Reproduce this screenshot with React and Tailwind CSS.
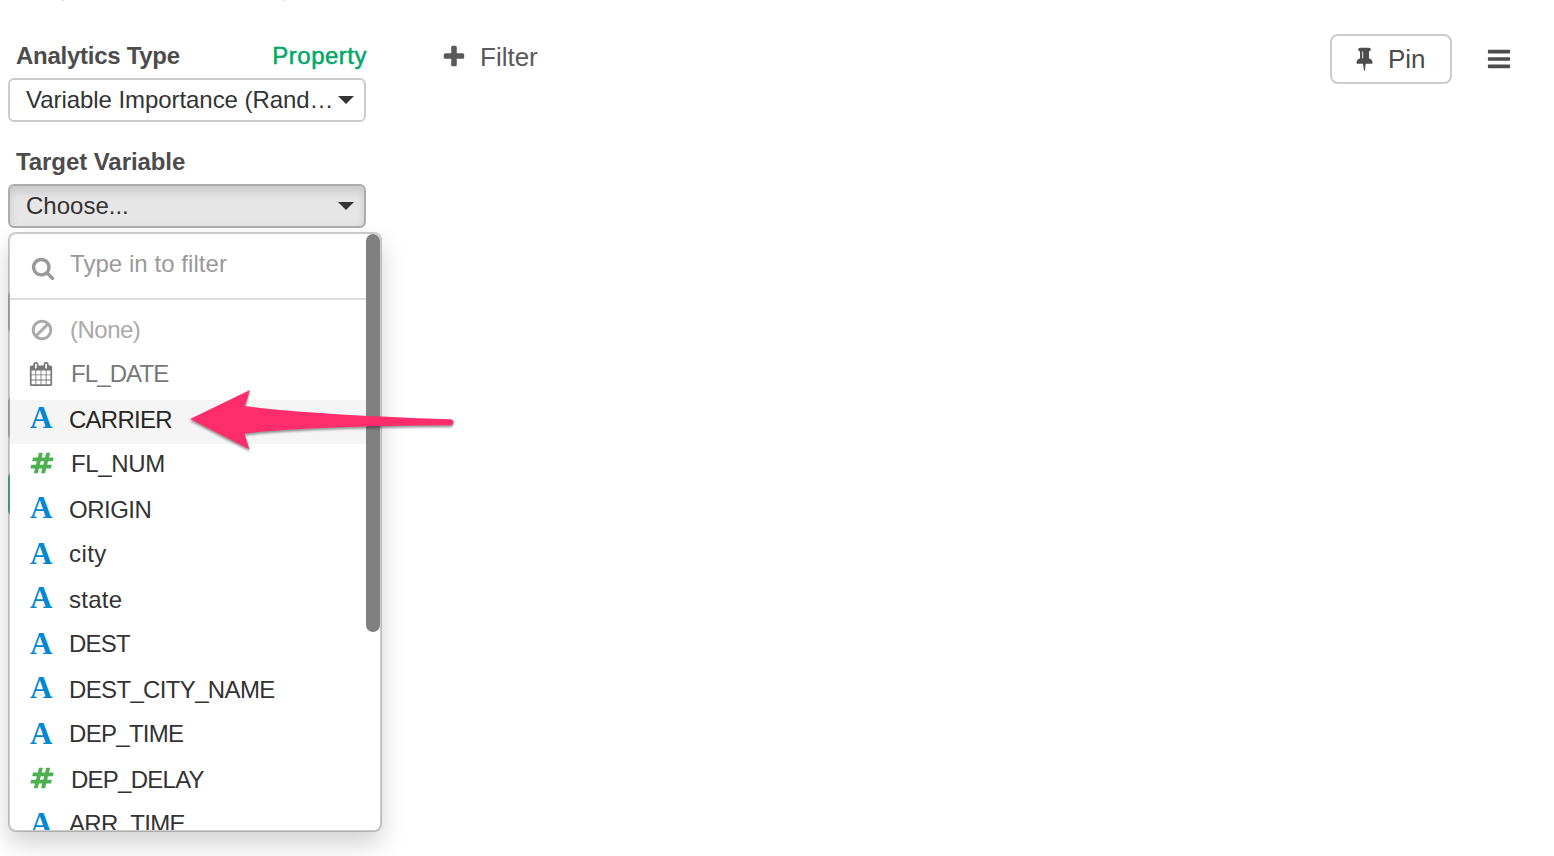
import React from "react";

const PATHS = {
  plus: "M1600 736v192q0 40-28 68t-68 28h-416v416q0 40-28 68t-68 28h-192q-40 0-68-28t-28-68v-416h-416q-40 0-68-28t-28-68v-192q0-40 28-68t68-28h416v-416q0-40 28-68t68-28h192q40 0 68 28t28 68v416h416q40 0 68 28t28 68z",
  search: "M1216 832q0-185-131.5-316.5t-316.5-131.5-316.5 131.5-131.5 316.5 131.5 316.5 316.5 131.5 316.5-131.5 131.5-316.5zm512 832q0 52-38 90t-90 38q-54 0-90-38l-343-342q-179 124-399 124-143 0-273.5-55.5t-225-150-150-225-55.5-273.5 55.5-273.5 150-225 225-150 273.5-55.5 273.5 55.5 225 150 150 225 55.5 273.5q0 220-124 399l343 343q37 37 37 90z",
  bars: "M1664 1344v128q0 26-19 45t-45 19h-1408q-26 0-45-19t-19-45v-128q0-26 19-45t45-19h1408q26 0 45 19t19 45zm0-512v128q0 26-19 45t-45 19h-1408q-26 0-45-19t-19-45v-128q0-26 19-45t45-19h1408q26 0 45 19t19 45zm0-512v128q0 26-19 45t-45 19h-1408q-26 0-45-19t-19-45v-128q0-26 19-45t45-19h1408q26 0 45 19t19 45z",
  calendar: "M192 1664h288v-288h-288v288zm352 0h320v-288h-320v288zm-352-352h288v-320h-288v320zm352 0h320v-320h-320v320zm-352-384h288v-288h-288v288zm736 736h320v-288h-320v288zm-384-736h320v-288h-320v288zm768 736h288v-288h-288v288zm-384-352h320v-320h-320v320zm-352-864v-288q0-13-9.5-22.5t-22.5-9.5h-64q-13 0-22.5 9.5t-9.5 22.5v288q0 13 9.5 22.5t22.5 9.5h64q13 0 22.5-9.5t9.5-22.5zm736 864h288v-320h-288v320zm-384-384h320v-288h-320v288zm384 0h288v-288h-288v288zm32-480v-288q0-13-9.5-22.5t-22.5-9.5h-64q-13 0-22.5 9.5t-9.5 22.5v288q0 13 9.5 22.5t22.5 9.5h64q13 0 22.5-9.5t9.5-22.5zm384-64v1280q0 52-38 90t-90 38h-1408q-52 0-90-38t-38-90v-1280q0-52 38-90t90-38h128v-96q0-66 47-113t113-47h64q66 0 113 47t47 113v96h384v-96q0-66 47-113t113-47h64q66 0 113 47t47 113v96h128q52 0 90 38t38 90z",
  ban: "M1440 893q0-161-87-295l-754 753q137 89 297 89 111 0 211.5-43.5t173.5-116.5 116-174.5 43-212.5zm-999 299l755-754q-135-91-300-91-148 0-273 73t-198 199-73 274q0 162 89 299zm1223-299q0 157-61 300t-163.5 246-245 164-298.5 61-298.5-61-245-164-163.5-246-61-300 61-299.5 163.5-245.5 245-164 298.5-61 298.5 61 245 164 163.5 245.5 61 299.5z",
  pin: "M800 864v-448q0-14-9-23t-23-9-23 9-9 23v448q0 14 9 23t23 9 23-9 9-23zm672 352q0 26-19 45t-45 19h-429l-51 483q-2 12-10.5 20.5t-20.5 8.5h-1q-27 0-32-27l-76-485h-404q-26 0-45-19t-19-45q0-123 78.5-221.5t177.5-98.5v-512q-52 0-90-38t-38-90 38-90 90-38h640q52 0 90 38t38 90-38 90-90 38v512q99 0 177.5 98.5t78.5 221.5z",
  hash: "M991 1024l64-256h-254l-64 256h254zm768-504l-56 224q-7 24-31 24h-327l-64 256h311q15 0 25 12 10 14 6 28l-56 224q-5 24-31 24h-327l-81 328q-7 24-31 24h-224q-16 0-26-12-9-12-6-28l78-312h-254l-81 328q-7 24-31 24h-225q-15 0-25-12-9-12-6-28l78-312h-311q-15 0-25-12-9-12-6-28l56-224q7-24 31-24h327l64-256h-311q-15 0-25-12-10-14-6-28l56-224q5-24 31-24h327l81-328q7-24 32-24h224q15 0 25 12 9 12 6 28l-78 312h254l81-328q7-24 32-24h224q15 0 25 12 9 12 6 28l-78 312h311q15 0 25 12 9 12 6 28z",
};

function Icon({ name, className }) {
  return (
    <svg viewBox="0 0 1792 1792" fill="currentColor" className={`shrink-0 overflow-visible ${className}`}>
      <path d={PATHS[name]} />
    </svg>
  );
}

const ROWS = [
  { type: "none", label: "(None)", text: "text-[#aaa] tracking-[-0.5px]" },
  { type: "date", label: "FL_DATE", text: "text-[#777] tracking-[-0.9px]" },
  { type: "text", label: "CARRIER", text: "text-[#262626] tracking-[-0.75px]", active: true },
  { type: "num", label: "FL_NUM", text: "text-[#333] tracking-[-0.35px]" },
  { type: "text", label: "ORIGIN", text: "text-[#333] tracking-[-0.5px]" },
  { type: "text", label: "city", text: "text-[#333] tracking-[0.4px]" },
  { type: "text", label: "state", text: "text-[#333] tracking-[0.25px]" },
  { type: "text", label: "DEST", text: "text-[#333] tracking-[-0.75px]" },
  { type: "text", label: "DEST_CITY_NAME", text: "text-[#333] tracking-[-0.65px]" },
  { type: "text", label: "DEP_TIME", text: "text-[#333] tracking-[-0.7px]" },
  { type: "num", label: "DEP_DELAY", text: "text-[#333] tracking-[-0.75px]" },
  { type: "text", label: "ARR_TIME", text: "text-[#333] tracking-[-0.7px]" },
];

function RowIcon({ type, odd }) {
  if (type === "none") return <Icon name="ban" className="mt-[7.5px] size-[24px] text-[#aaa]" />;
  if (type === "date") return <Icon name="calendar" className="mt-[7.5px] ml-[-1px] size-[24px] text-[#777]" />;
  if (type === "num")
    return <Icon name="hash" className={`size-[24px] text-[#4caf50] ${odd ? "mt-[7px]" : "mt-[5.5px]"}`} />;
  return (
    <span
      className={`font-['Liberation_Serif',serif] text-[31px] font-bold text-[#0288d1] ${odd ? "leading-[40px]" : "leading-[36px]"}`}
    >
      A
    </span>
  );
}

function Row({ row, index }) {
  const odd = index % 2 === 1;
  return (
    <li className={odd ? "h-[46px]" : "h-[44px]"}>
      <div className={`flex h-[44px] items-start pl-[20px] ${row.active ? "bg-[#f5f5f5]" : ""}`}>
        <span className={`flex shrink-0 ${row.type === "text" ? "w-[39px]" : row.type === "none" ? "w-[40px]" : "w-[41px]"}`}>
          <RowIcon type={row.type} odd={odd} />
        </span>
        <span className={`text-[24px] leading-[40px] whitespace-nowrap ${row.text}`}>{row.label}</span>
      </div>
    </li>
  );
}

function Caret() {
  return (
    <svg viewBox="0 0 16 8" className="h-[8px] w-[16px] shrink-0 fill-[#333]">
      <path d="M0 0h16l-8 8z" />
    </svg>
  );
}

function Dropdown() {
  return (
    <div className="absolute top-[232px] left-[8px] flex h-[600px] w-[374px] overflow-hidden rounded-[8px] border-2 border-black/20 bg-white bg-clip-padding shadow-[0_12px_24px_rgba(0,0,0,0.175)]">
      <div className="w-[356px] shrink-0">
        <div className="flex h-[66px] items-start border-b-2 border-[#ddd] pl-[21px]">
          <Icon name="search" className="mt-[21.5px] size-[24px] text-[#999]" />
          <span className="ml-[15px] pt-[10px] text-[24px] leading-[40px] tracking-[0.05px] whitespace-nowrap text-[#999]">
            Type in to filter
          </span>
        </div>
        <ul className="pt-[10px]">
          {ROWS.map((row, i) => (
            <Row key={row.label} row={row} index={i} />
          ))}
        </ul>
      </div>
      <div className="h-[398px] w-[14px] rounded-[7px] bg-[#808080]" />
    </div>
  );
}

function Arrow() {
  return (
    <svg
      viewBox="0 0 280 80"
      className="absolute top-[380px] left-[180px] h-[80px] w-[280px] drop-shadow-[0_2px_1px_rgba(0,0,0,0.4)]"
    >
      <path
        d="M10 39L70 10L65 26Q130 34.500 270.500 39.200Q273.500 39.500 273.500 42.300Q273.500 45 270.500 45.200Q130 46 64.500 53.500L69.500 69.500Z"
        fill="#ff2d6b"
      />
    </svg>
  );
}

export default function App() {
  return (
    <div className="relative flex h-[856px] w-[1554px] overflow-hidden bg-white font-['Liberation_Sans',Arial,sans-serif]">
      <aside className="flex w-[366px] shrink-0 flex-col pl-[8px]">
        <div className="flex h-[40px] items-start">
          <span className="ml-[54px] h-px w-[2px] bg-[#ddd]" />
          <span className="ml-[219px] h-px w-[2px] bg-[#ddd]" />
        </div>
        <div className="flex h-[38px] justify-between pl-[8px] text-[24px] leading-[32px] whitespace-nowrap">
          <span className="font-bold tracking-[-0.27px] text-[#4c4c4c]">Analytics Type</span>
          <span className="mr-[-1px] tracking-[0.5px] text-[#00a865] [-webkit-text-stroke:0.5px_#00a865]">Property</span>
        </div>
        <div className="flex h-[44px] items-center justify-between rounded-[6px] border-2 border-[#ccc] pr-[10px] pl-[16px] text-[24px] leading-[40px] whitespace-nowrap text-[#333]">
          <span className="tracking-[-0.06px]">Variable Importance (Rand…</span>
          <Caret />
        </div>
        <div className="mt-[24px] h-[38px] pl-[8px] text-[24px] leading-[32px] font-bold tracking-[-0.07px] text-[#4c4c4c]">
          Target Variable
        </div>
        <div className="flex h-[44px] items-center justify-between rounded-[6px] border-2 border-[#adadad] bg-[#e6e6e6] pr-[10px] pl-[16px] text-[24px] leading-[40px] text-[#333] shadow-[inset_0_6px_10px_rgba(0,0,0,0.125)]">
          <span>Choose...</span>
          <Caret />
        </div>
        <div className="mt-[62px] h-[44px] rounded-[6px] border-2 border-[#ccc]" />
        <div className="mt-[62px] h-[44px] rounded-[6px] border-2 border-[#ccc]" />
        <div className="mt-[32px] h-[44px] rounded-[6px] bg-[#5fc09b]" />
      </aside>

      <main className="flex flex-1 items-start justify-between">
        <div className="mt-[37px] ml-[75px] flex h-[40px] items-center gap-[13px] text-[#5a5a5a]">
          <Icon name="plus" className="size-[26px]" />
          <span className="text-[26px] leading-[40px]">Filter</span>
        </div>
        <div className="mt-[34px] mr-[42px] flex items-center">
          <div className="flex h-[50px] w-[122px] items-center rounded-[8px] border-2 border-[#ccc] pl-[20px] text-[#4c4c4c]">
            <Icon name="pin" className="mt-[-1px] size-[25px]" />
            <span className="ml-[11px] text-[26px] leading-[40px]">Pin</span>
          </div>
          <Icon name="bars" className="ml-[34px] size-[26px] text-[#4c4c4c]" />
        </div>
      </main>

      <Dropdown />
      <Arrow />
    </div>
  );
}
